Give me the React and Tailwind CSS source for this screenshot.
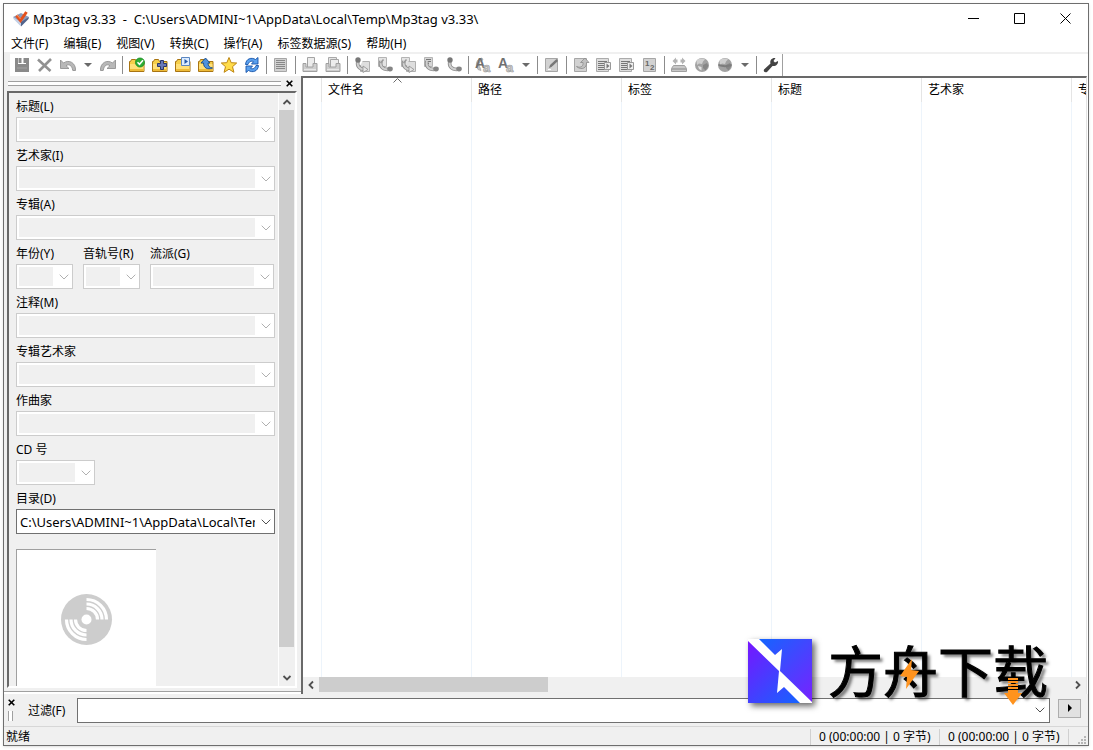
import React from "react";

const fonts = "font-['Noto_Sans','Noto_Sans_CJK_SC',sans-serif]";

const menus = ["文件(F)", "编辑(E)", "视图(V)", "转换(C)", "操作(A)", "标签数据源(S)", "帮助(H)"];

const columns = ["文件名", "路径", "标签", "标题", "艺术家", "专辑"];

const Svg = ({ children }) => (
  <svg viewBox="0 0 16 16" className="w-4 h-4 overflow-visible" aria-hidden="true">
    {children}
  </svg>
);

const Folder = ({ children }) => (
  <Svg>
    <path d="M.5 14.500V4.500h1l1-2h4l1 2h7.500v10z" fill="#f6cf4a" stroke="#a87412" />
    <path d="M1 7h13.500v7H1z" fill="#ffe078" />
    <path d="M1 12h13.500v2H1z" fill="#eebb38" />
    {children}
  </Svg>
);

const Page = ({ children }) => (
  <Svg>
    <path d="M1.500 1.500h12v13h-12z" fill="#d2d2d2" stroke="#a6a6a6" />
    {children}
  </Svg>
);

// convert buttons: start and end are either a dot or a page, joined by a bent pipe
const Convert = ({ fromPage, toPage, text }) => (
  <Svg>
    {fromPage && <path d="M1.500.5h8v9h-8z" fill={text ? "#d6d6d6" : "#e4e4e4"} stroke="#b4b4b4" />}
    {text && <path d="M3 2.500h5M4 4.500h4M3 6.500h3" stroke="#777" />}
    {toPage && <path d="M8.500 4.500h7v10h-9V8" fill="#dedede" stroke="#b0b0b0" />}
    <path d="M4 4c-1.500 5 1.500 8.500 7 8.500" fill="none" stroke="#8f8f8f" strokeWidth="3.600" />
    <path d="M4 4c-1.500 5 1.500 8.500 7 8.500" fill="none" stroke="#cfcfcf" strokeWidth="1.800" />
    {toPage && <path d="M9 9l5 3.500-5 3z" fill="#e6e6e6" stroke="#8f8f8f" strokeWidth=".8" />}
    {!toPage && <ellipse cx="13" cy="12" rx="2.800" ry="2.400" fill="#858585" />}
    {!fromPage && <circle cx="4" cy="3" r="2.700" fill="#777" />}
    {fromPage && !text && <path d="M3.500 6l3-3.500" stroke="#989898" strokeWidth="1.500" />}
  </Svg>
);

const Printer = ({ double }) => (
  <Svg>
    {double && <path d="M3.500 9V.5h8V9" fill="#e4e4e4" stroke="#a9a9a9" />}
    <path d={double ? "M5.500 10V2.500h8V10" : "M5.500 10V.5h7V10"} fill="#ececec" stroke="#a4a4a4" />
    <path d="M1 6.500h3V10h7V6.500h4v8H1z" fill="#cecece" stroke="#a0a0a0" />
    <path d="M2 12.500h12" stroke="#e8e8e8" />
  </Svg>
);

const Lines = () => (
  <Svg>
    <path d="M.5 1.500h12v13H.5z" fill="#dedede" stroke="#ababab" />
    <path d="M2 4.500h9M2 6.500h6M2 8.500h6M2 10.500h6M2 12.500h9" stroke="#777" />
    <path d="M8.500 5.500h6v7h-6z" fill="#eee" stroke="#999" />
    <path d="M10.500 6.500l3 2.500-3 2.500z" fill="#777" />
  </Svg>
);

const Globe = ({ band }) => (
  <Svg>
    <circle cx="8" cy="8" r="7" fill="#a2a2a2" />
    <path d="M2.500 4C4.500 1 9 1 11 2.500L9 4.500 8 7 5 6.500 3 8z" fill="#cfcfcf" />
    <path d="M9 8l4-2 1.500 3-3 4.500L9 11z" fill="#868686" />
    {band ? (
      <path d="M1.500 7c4 1.500 9 1.500 13 0v2c-4 1.500-9 1.500-13 0z" fill="#7c7c7c" />
    ) : (
      <path d="M4 9l3.500 1v3.500L5 12z" fill="#e2e2e2" />
    )}
  </Svg>
);

const Undo = ({ flip }) => (
  <svg viewBox="0 0 16 16" className={flip ? "w-4 h-4 -scale-x-100" : "w-4 h-4"} aria-hidden="true">
    <path d="M.5 3v8.500H9L6 8.700C9 6.500 12 8.500 12.800 13.500h2.700C16 6 9 2 3.500 6z" fill="#b8b8b8" stroke="#929292" strokeWidth=".9" />
  </svg>
);

const Letters = ({ swoosh }) => (
  <Svg>
    <g className="font-['Liberation_Sans',sans-serif] font-bold">
      {swoosh && <path d="M7 1C1 2 0 8 3 12.500l3 1-1-3C3 8 4 4 8 3z" fill="#c4c4c4" stroke="#a0a0a0" strokeWidth=".7" />}
      <text x="0" y="11" fontSize="14" fill="#707070">A</text>
      <text x="8" y="15" fontSize="13" fill="#d0d0d0" stroke="#a2a2a2" strokeWidth=".7">a</text>
    </g>
  </Svg>
);

const toolbar = [
  { name: "保存", icon: <Svg><path d="M1 1h3v6h8V1h3v14H1z" fill="#8a8a8a" /><path d="M4.500 1h3v5h-3zM9.500 1H12v5H9.500z" fill="#8a8a8a" /><path d="M3 11h10" stroke="#a2a2a2" /></Svg> },
  { name: "删除", icon: <Svg><path d="M1 2.500L13.500 14M14 2L2 14" stroke="#919191" strokeWidth="2.600" /></Svg> },
  { name: "撤消", icon: <Undo /> },
  "caret",
  { name: "重做", icon: <Undo flip /> },
  "sep",
  { name: "更改目录", icon: <Folder><circle cx="11" cy="5.500" r="4.500" fill="#2fae35" stroke="#158a20" strokeWidth=".8" /><path d="M8.500 5.300l2 2 3.500-4" fill="none" stroke="#fff" strokeWidth="1.600" /></Folder> },
  { name: "添加目录", icon: <Folder><path d="M8.500 3.500h3v3h3v3h-3v3h-3v-3h-3v-3h3z" fill="#6878b8" stroke="#2b3768" /></Folder> },
  { name: "播放列表", icon: <Folder><path d="M6.500.5h8v8h-8z" fill="#dcecff" stroke="#5b86c0" /><path d="M9.500 2l3.500 2.500L9.500 7z" fill="#2358a8" /></Folder> },
  { name: "上级目录", icon: <Folder><path d="M7.500 1L3 6h2.500c0 5 4 7 9 5-3-.5-4.500-2-4.500-5h2z" fill="#4e92dc" stroke="#174a86" strokeWidth=".9" /></Folder> },
  { name: "收藏", icon: <Svg><path d="M8 .5l2.200 5.200 5.500.3-4.200 3.700 1.400 5.600L8 12.200l-4.900 3.100 1.400-5.600L.3 6l5.500-.3z" fill="#ffdc4a" stroke="#bd8512" /></Svg> },
  { name: "刷新", icon: <Svg><path d="M1.500 7.500C2 1.500 7.500 0 11.500 2.500L14 .5V7H7.500l2-2.300C7.500 3.500 5 4.500 4 7.500zM14.500 8.500C14 14.500 8.500 16 4.500 13.500L2 15.500V9h6.500l-2 2.300c2 1.200 4.500.2 5.500-2.800z" fill="#5aa0ee" stroke="#1653a8" strokeWidth=".9" /></Svg> },
  "sep",
  { name: "全选", icon: <Page><path d="M3 3.500h9M3 5.500h9M3 7.500h9M3 9.500h9M3 11.500h9" stroke="#888" /></Page> },
  "sep",
  { name: "标签剪切", icon: <Printer /> },
  { name: "标签粘贴", icon: <Printer double /> },
  "sep",
  { name: "标签 - 文件名", icon: <Convert toPage /> },
  { name: "文件名 - 标签", icon: <Convert fromPage /> },
  { name: "文件名 - 文件名", icon: <Convert fromPage toPage /> },
  { name: "文本文件 - 标签", icon: <Convert fromPage text /> },
  { name: "标签 - 标签", icon: <Convert /> },
  "sep",
  { name: "操作", icon: <Letters swoosh /> },
  { name: "快速操作", icon: <Letters /> },
  "caret",
  "sep",
  { name: "扩展标签", icon: <Page><path d="M5 11l1-3 6.500-6L14 4l-6.500 6z" fill="#777" /><path d="M4 12.500h3" stroke="#fff" /></Page> },
  "sep",
  { name: "重命名", icon: <Page><path d="M3.500 9.500c5 2 7-1 6.500-4H7.500L12 1l4 4.500h-2.500c.5 5-4.500 8.500-10 4z" fill="#c0c0c0" stroke="#8c8c8c" strokeWidth=".8" /></Page> },
  { name: "导出", icon: <Lines /> },
  { name: "播放列表导出", icon: <Lines /> },
  {
    name: "自动编号",
    icon: (
      <Page>
        <g className="font-['Liberation_Sans',sans-serif] font-bold" fill="#666" fontSize="8">
          <text x="3" y="9">1</text>
          <text x="8" y="13">2</text>
        </g>
      </Page>
    ),
  },
  "sep",
  { name: "freedb", icon: <Svg><path d="M2.500 8.500h11l2 3v3H.5v-3z" fill="#c8c8c8" stroke="#a0a0a0" /><path d="M1 12h14" stroke="#8a8a8a" /><path d="M1.500 4L5 .5v2h1.500v3H5v2zM14.500 4L11 .5v2H9.500v3H11v2z" fill="#b4b4b4" /></Svg> },
  { name: "Discogs", icon: <Globe /> },
  { name: "网络来源", icon: <Globe band /> },
  "caret",
  "sep",
  { name: "选项", icon: <Svg><path d="M1 12.500L7.500 6.500C6.500 3 9 .5 12.500 1L10.500 4l1.500 1.500 3-1.500c.5 3-2 5.500-5.500 5L4 15c-2 1-4-.5-3-2.500z" fill="#444" /></Svg> },
];

const Chevron = ({ className }) => (
  <svg viewBox="0 0 10 6" className={`w-[10px] h-[6px] shrink-0 ${className}`} fill="none" stroke="currentColor" aria-hidden="true">
    <path d="M.7.700L5 5 9.300.700" />
  </svg>
);

const Field = ({ id, label, value, className = "w-full" }) => (
  <div className={className}>
    <label htmlFor={id} className="block h-6 pt-1 leading-5 whitespace-nowrap">{label}</label>
    <div className={`flex items-center h-[25px] border bg-white p-[2px] pr-[3px] ${value ? "border-[#707070]" : "border-[#cccccc]"}`}>
      <select
        id={id}
        disabled={!value}
        className={`appearance-none flex-1 min-w-0 h-full mr-[6px] overflow-hidden outline-none text-[13px] leading-4 text-black pl-px ${value ? "bg-white" : "bg-[#f0f0f0]"}`}
      >
        {value && <option>{value}</option>}
      </select>
      <Chevron className={value ? "text-[#505050]" : "text-[#b0b0b0]"} />
    </div>
  </div>
);

const Arrow = ({ d }) => (
  <svg viewBox="0 0 10 10" className="w-[10px] h-[10px]" fill="none" stroke="#505050" strokeWidth="1.800" aria-hidden="true">
    <path d={d} />
  </svg>
);

const CloseX = () => (
  <svg viewBox="0 0 7 7" className="w-[7px] h-[7px]" stroke="#000" strokeWidth="1.600" aria-hidden="true">
    <path d="M.7.700l5.600 5.600M6.300.700L.7 6.300" />
  </svg>
);

const Toolbar = () => (
  <div className="flex h-[22px] bg-white border-l-[6px] border-[#f0f0f0]" role="toolbar">
    {toolbar.map((item, i) => {
      if (item === "sep") {
        return <span key={i} className="w-[6px] shrink-0 flex justify-center py-[2px]"><span className="w-px bg-[#8c8c8c]"></span></span>;
      }
      if (item === "caret") {
        return (
          <button key={i} aria-label="更多" className="w-[17px] shrink-0 flex items-center justify-center">
            <svg viewBox="0 0 8 4" className="w-2 h-1"><path d="M0 0h8L4 4z" fill="#6a6a6a" /></svg>
          </button>
        );
      }
      return (
        <button key={i} aria-label={item.name} className="w-[23px] shrink-0 flex items-center justify-center">
          {item.icon}
        </button>
      );
    })}
    <span className="w-px bg-[#a0a0a0]"></span>
  </div>
);

const TagPanel = () => (
  <aside className="w-[297px] shrink-0 flex flex-col bg-[#f0f0f0] border-b-2 border-white">
    <div className="flex items-center h-[15px] pl-1 pr-2 gap-[5px]">
      <div className="flex-1 h-[5px] border-y border-[#a0a0a0] bg-white"></div>
      <button aria-label="关闭面板"><CloseX /></button>
    </div>
    <div className="flex-1 min-h-0 flex flex-col pl-[3px] pr-1 pb-[3px] border-b border-[#a0a0a0]">
      <div className="flex-1 min-h-0 flex border-2 border-t-[#696969] border-l-[#696969] border-r-white border-b-white">
        <div className="flex-1 min-w-0 overflow-hidden pl-[7px] pr-[3px]">
          <Field id="title" label="标题(L)" />
          <Field id="artist" label="艺术家(I)" />
          <Field id="album" label="专辑(A)" />
          <div className="flex gap-[10px] pr-px">
            <Field id="year" label="年份(Y)" className="w-[57px]" />
            <Field id="track" label="音轨号(R)" className="w-[57px]" />
            <Field id="genre" label="流派(G)" className="flex-1" />
          </div>
          <Field id="comment" label="注释(M)" />
          <Field id="albumartist" label="专辑艺术家" />
          <Field id="composer" label="作曲家" />
          <Field id="disc" label="CD 号" className="w-[79px]" />
          <Field id="dir" label="目录(D)" value="C:\Users\ADMINI~1\AppData\Local\Temp\Mp3tag v3.33\" />
          <div className="mt-[15px] w-[140px] h-[140px] bg-white border-t border-l border-[#a0a0a0] flex items-center justify-center">
            <svg viewBox="0 0 52 52" className="w-[52px] h-[52px]" aria-hidden="true">
              <circle cx="25.500" cy="25.500" r="25.500" fill="#cdcdcd" />
              <g fill="none" stroke="#fff" strokeWidth="3.200">
                <path d="M25.500 5.500a20 20 0 0 1 20 20M25.500 10a15.500 15.500 0 0 1 15.500 15.500M25.500 14.500a11 11 0 0 1 11 11" />
                <path d="M25.500 45.500a20 20 0 0 1-20-20M25.500 41a15.500 15.500 0 0 1-15.500-15.500M25.500 36.500a11 11 0 0 1-11-11" />
              </g>
              <circle cx="25.500" cy="25.500" r="8" fill="#cdcdcd" />
              <circle cx="25.500" cy="25.500" r="5" fill="#fff" />
            </svg>
          </div>
        </div>
        <div className="w-[17px] flex flex-col border-l border-white">
          <button aria-label="向上滚动" className="h-[17px] flex items-center justify-center"><Arrow d="M1.500 7L5 3.500 8.500 7" /></button>
          <div className="flex-1"><div className="h-[96%] w-[15px] bg-[#cdcdcd]"></div></div>
          <button aria-label="向下滚动" className="h-[17px] flex items-center justify-center"><Arrow d="M1.500 3L5 6.500 8.500 3" /></button>
        </div>
      </div>
    </div>
  </aside>
);

const FileList = () => (
  <section className="flex-1 min-w-0 flex flex-col bg-white border-t-2 border-l-2 border-r border-t-[#696969] border-l-[#696969] border-r-[#e3e3e3] mr-px">
    <div className="flex-1 min-h-0 overflow-hidden">
      <table className="table-fixed w-[918px] h-full border-separate border-spacing-0">
        <thead>
          <tr className="h-6">
            <th aria-label="图标" className="w-[19px] border-r border-[#e5e5e5]"></th>
            {columns.map((name, i) => (
              <th key={name} scope="col" className="relative w-[150px] pl-[6px] text-left font-normal border-r border-[#e5e5e5]">
                {name}
                {i === 0 && (
                  <svg viewBox="0 0 9 5" className="absolute top-0 left-[71px] w-[9px] h-[5px]" fill="none" stroke="#6a6a6a">
                    <path d="M.5 4.500l4-4 4 4" />
                  </svg>
                )}
              </th>
            ))}
          </tr>
        </thead>
        <tbody>
          <tr>
            <td className="border-r border-[#edf4fb]"></td>
            {columns.map((name) => (
              <td key={name} className="border-r border-[#edf4fb]"></td>
            ))}
          </tr>
        </tbody>
      </table>
    </div>
    <div className="flex items-center h-[15px] bg-[#f0f0f0]">
      <button aria-label="向左滚动" className="w-4 flex justify-center"><Arrow d="M7 1.500L3.500 5 7 8.500" /></button>
      <div className="flex-1 h-full"><div className="w-[30.500%] h-full bg-[#cdcdcd]"></div></div>
      <button aria-label="向右滚动" className="w-4 flex justify-center"><Arrow d="M3 1.500L6.500 5 3 8.500" /></button>
    </div>
    <div className="h-[2px] bg-[#f0f0f0]"></div>
  </section>
);

const Watermark = () => (
  <div className="absolute right-[45px] bottom-[47px] flex items-center gap-4 pointer-events-none">
    <svg viewBox="0 0 64 64" className="w-16 h-16 drop-shadow-[3px_3px_3px_rgba(0,0,0,0.6)]" aria-hidden="true">
      <defs>
        <linearGradient id="up" x1="0" y1="0" x2="1" y2="1">
          <stop offset="0" stopColor="#0a6cff" />
          <stop offset="1" stopColor="#7a20ff" />
        </linearGradient>
        <linearGradient id="low" x1="0" y1="0" x2="1" y2="1">
          <stop offset="0" stopColor="#7a14ff" />
          <stop offset="1" stopColor="#0a6cff" />
        </linearGradient>
      </defs>
      <path d="M0 0h64v64z" fill="url(#up)" />
      <path d="M0 0v64h64z" fill="url(#low)" />
      <path d="M0 0h11l16 16 7-6-2 22 32 31v1H52L36 48l-7 6 2-22L0 2z" fill="#fff" />
    </svg>
    <div className="relative h-16">
      <span className="block text-[55px] leading-16 text-black [-webkit-text-stroke:1px_black] [text-shadow:3px_3px_3px_rgba(0,0,0,0.5)] whitespace-nowrap">方舟下载</span>
      <svg viewBox="0 0 220 72" className="absolute left-0 top-0 w-[220px] h-[72px]" aria-hidden="true">
        <path d="M84 20L72 37l7 1-1 12 13-18-8-1z" fill="#ff931e" />
        <path d="M180 40h10M180 43h10M180 46h10M180 49h10" stroke="#ff931e" strokeWidth="2" />
        <path d="M180 51h10v3h4l-9 12-9-12h4z" fill="#ff931e" />
      </svg>
    </div>
  </div>
);

const App = () => {
  return (
    <div className={`relative h-screen bg-white pt-[3px] pl-[3px] pr-1 pb-1 text-[12px] leading-4 text-black ${fonts}`}>
      <div className="h-full flex flex-col border border-[#6e6e6e] shadow-sm">
        {/* Title bar */}
        <header className="flex items-center h-[29px] pl-2">
          <svg viewBox="0 0 18 16" className="w-[18px] h-4 shrink-0" aria-hidden="true">
            <path d="M1 6l8-4 8 4-8 9z" fill="#8d9dbd" />
            <path d="M1 6l8 5v4.500L1.500 8z" fill="#c4d0e5" />
            <path d="M17 6l-8 5v4.500L16.500 8z" fill="#52658c" />
            <path d="M4.500 4.500l4 5L14.500 1" fill="none" stroke="#e5501c" strokeWidth="3" />
            <path d="M5 4l3.500 4" stroke="#ff9a62" />
          </svg>
          <h1 className="flex-1 pl-[3px] text-[13px] whitespace-pre">{"Mp3tag v3.33  -  C:\\Users\\ADMINI~1\\AppData\\Local\\Temp\\Mp3tag v3.33\\"}</h1>
          <button aria-label="最小化" className="w-[46px] h-full flex items-center justify-center">
            <svg viewBox="0 0 11 11" className="w-[11px] h-[11px]" stroke="#000"><path d="M0 5.500h11" /></svg>
          </button>
          <button aria-label="最大化" className="w-[46px] h-full flex items-center justify-center">
            <svg viewBox="0 0 11 11" className="w-[11px] h-[11px]" stroke="#000" fill="none"><path d="M.5.500h10v10H.5z" /></svg>
          </button>
          <button aria-label="关闭" className="w-[46px] h-full flex items-center justify-center">
            <svg viewBox="0 0 11 11" className="w-[11px] h-[11px]" stroke="#000"><path d="M.5.500l10 10M10.500.500l-10 10" /></svg>
          </button>
        </header>

        {/* Menu */}
        <nav className="flex items-end gap-px h-[21px] border-b-2 border-[#f0f0f0]">
          {menus.map((m) => (
            <button key={m} className="px-[7px] whitespace-nowrap">{m}</button>
          ))}
        </nav>

        <Toolbar />

        <main className="flex-1 min-h-0 flex">
          <TagPanel />
          <FileList />
        </main>

        {/* Filter */}
        <div className="flex items-center h-8 bg-[#f0f0f0] pl-1 pr-[7px]">
          <div className="flex flex-col gap-[5px] w-[7px]">
            <button aria-label="关闭过滤"><CloseX /></button>
            <div className="w-[5px] h-[10px] border-x border-[#a0a0a0] bg-white"></div>
          </div>
          <label htmlFor="filter" className="pl-[13px] pt-[2px] w-[62px] whitespace-nowrap">过滤(F)</label>
          <div className="flex-1 flex items-center h-[25px] bg-white border border-[#707070] pr-1">
            <input id="filter" type="text" className="flex-1 min-w-0 h-full px-1 outline-none" />
            <Chevron className="text-[#505050]" />
          </div>
          <button aria-label="展开" className="ml-2 mb-1 w-[23px] h-[19px] bg-[#e1e1e1] border border-[#adadad] flex items-center justify-center">
            <svg viewBox="0 0 4 8" className="w-1 h-2"><path d="M0 0l4 4-4 4z" /></svg>
          </button>
        </div>

        {/* Status bar */}
        <footer className="flex items-end h-[19px] bg-[#f0f0f0] border-t border-[#d7d7d7] pl-[2px] pr-px">
          <span className="flex-1">就绪</span>
          <span className="w-[129px] border-l border-[#d0d0d0] pl-2 whitespace-nowrap">0 (00:00:00 | 0 字节)</span>
          <span className="w-[129px] border-l border-[#d0d0d0] pl-2 whitespace-nowrap">0 (00:00:00 | 0 字节)</span>
          <span className="w-[19px] h-4 border-l border-[#d0d0d0] flex items-end justify-end">
            <svg viewBox="0 0 9 9" className="w-[9px] h-[9px]" fill="#b5b5b5">
              <path d="M6 0h2v2H6zM3 3h2v2H3zM6 3h2v2H6zM0 6h2v2H0zM3 6h2v2H3zM6 6h2v2H6z" />
            </svg>
          </span>
        </footer>
      </div>
      <Watermark />
    </div>
  );
};

export default App;
